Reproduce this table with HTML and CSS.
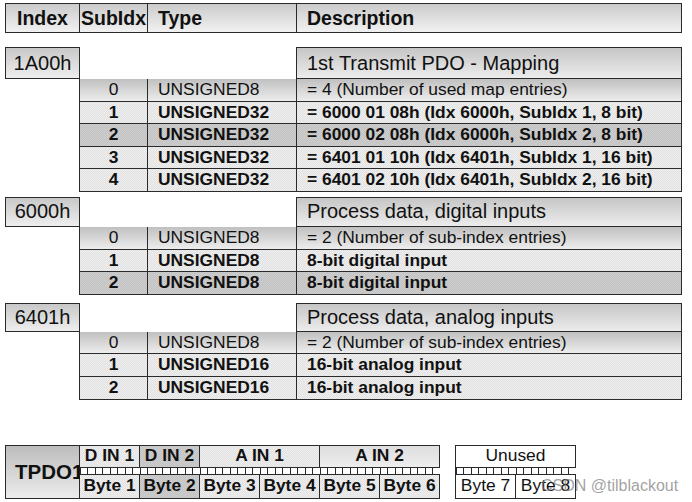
FILE: index.html
```html
<!DOCTYPE html>
<html>
<head>
<meta charset="utf-8">
<link rel="stylesheet" href="styles.css">
</head>
<body>
<div class="doc">
  <div class="hdr">
    <div class="hc center">Index</div>
    <div class="hc center">SubIdx</div>
    <div class="hc">Type</div>
    <div class="hc">Description</div>
  </div>

  <section class="obj first">
    <div class="obj-top tall">
      <div class="obj-idx">1A00h</div>
      <div class="obj-desc">1st Transmit PDO - Mapping</div>
    </div>
    <div class="subs">
      <div class="row grad"><div class="sc num">0</div><div class="sc">UNSIGNED8</div><div class="sc">= 4 (Number of used map entries)</div></div>
      <div class="row tex-l bold"><div class="sc num">1</div><div class="sc">UNSIGNED32</div><div class="sc">= 6000 01 08h (Idx 6000h, SubIdx 1, 8 bit)</div></div>
      <div class="row tex-d bold"><div class="sc num">2</div><div class="sc">UNSIGNED32</div><div class="sc">= 6000 02 08h (Idx 6000h, SubIdx 2, 8 bit)</div></div>
      <div class="row tex-l bold"><div class="sc num">3</div><div class="sc">UNSIGNED32</div><div class="sc">= 6401 01 10h (Idx 6401h, SubIdx 1, 16 bit)</div></div>
      <div class="row tex-l bold"><div class="sc num">4</div><div class="sc">UNSIGNED32</div><div class="sc">= 6401 02 10h (Idx 6401h, SubIdx 2, 16 bit)</div></div>
    </div>
  </section>

  <section class="obj second">
    <div class="obj-top">
      <div class="obj-idx">6000h</div>
      <div class="obj-desc">Process data, digital inputs</div>
    </div>
    <div class="subs">
      <div class="row grad"><div class="sc num">0</div><div class="sc">UNSIGNED8</div><div class="sc">= 2 (Number of sub-index entries)</div></div>
      <div class="row tex-l bold"><div class="sc num">1</div><div class="sc">UNSIGNED8</div><div class="sc">8-bit digital input</div></div>
      <div class="row tex-d bold"><div class="sc num">2</div><div class="sc">UNSIGNED8</div><div class="sc">8-bit digital input</div></div>
    </div>
  </section>

  <section class="obj third">
    <div class="obj-top short">
      <div class="obj-idx">6401h</div>
      <div class="obj-desc">Process data, analog inputs</div>
    </div>
    <div class="subs">
      <div class="row grad"><div class="sc num">0</div><div class="sc">UNSIGNED8</div><div class="sc">= 2 (Number of sub-index entries)</div></div>
      <div class="row tex-l bold"><div class="sc num">1</div><div class="sc">UNSIGNED16</div><div class="sc">16-bit analog input</div></div>
      <div class="row tex-l bold"><div class="sc num">2</div><div class="sc">UNSIGNED16</div><div class="sc">16-bit analog input</div></div>
    </div>
  </section>

  <div class="tpdo">
    <div class="tp-label">TPDO1</div>
    <div class="tp-fields">
      <div class="fc tex-l">D IN 1</div>
      <div class="fc tex-d">D IN 2</div>
      <div class="fc tex-l span2">A IN 1</div>
      <div class="fc grad-l span2">A IN 2</div>
      <div class="strip"></div>
      <div class="bc tex-l">Byte 1</div>
      <div class="bc tex-d">Byte 2</div>
      <div class="bc tex-l">Byte 3</div>
      <div class="bc tex-l">Byte 4</div>
      <div class="bc tex-l">Byte 5</div>
      <div class="bc tex-l">Byte 6</div>
    </div>
    <div class="tp-unused">
      <div class="fc span2">Unused</div>
      <div class="strip"></div>
      <div class="bc">Byte 7</div>
      <div class="bc">Byte 8</div>
    </div>
  </div>
</div>
<div class="wm">CSDN @tilblackout</div>
</body>
</html>
```

FILE: styles.css
```css
* { box-sizing: border-box; }

html, body {
  margin: 0;
  background: #fff;
}

body {
  width: 692px;
  height: 502px;
  overflow: hidden;
  position: relative;
  padding: 3px 0 0 5px;
  font-family: "Liberation Sans", Arial, sans-serif;
  color: #111;
}

.doc { width: 677px; }

/* header */
.hdr {
  display: grid;
  grid-template-columns: 74px 68px 149px 1fr;
  height: 30px;
  border: 1px solid #2a2a2a;
  font-weight: bold;
  font-size: 19.5px;
}
.hc {
  display: flex;
  align-items: center;
  padding-left: 10px;
  border-right: 1px solid #2a2a2a;
  background: linear-gradient(#cbcbcb, #f1f1f1);
  white-space: nowrap;
}
.hc:last-child { border-right: 0; }
.hc.center { justify-content: center; padding-left: 0; }

/* object blocks */
.obj.first { margin-top: 14px; }
.obj.second { margin-top: 5px; }
.obj.third { margin-top: 8px; }

.obj-top {
  display: flex;
  justify-content: space-between;
  height: 30px;
  font-size: 20px;
}
.obj-top.tall { height: 32px; }
.obj-top.short { height: 29px; }
.obj-idx {
  width: 75px;
  border: 1px solid #2a2a2a;
  display: flex;
  align-items: center;
  justify-content: center;
  background: linear-gradient(#c8c8c8, #eeeeee);
}
.obj-desc {
  width: 386px;
  border: 1px solid #2a2a2a;
  display: flex;
  align-items: center;
  padding-left: 10px;
  background: linear-gradient(#c6c6c6, #ececec);
  white-space: nowrap;
}

.subs {
  margin-left: 74px;
  border-left: 1px solid #2a2a2a;
  font-size: 17.4px;
}
.row {
  display: grid;
  grid-template-columns: 68px 149px 1fr;
  height: 22.6px;
  border-bottom: 1px solid #2a2a2a;
}
.row.bold { font-weight: bold; }
.sc {
  display: flex;
  align-items: center;
  padding-left: 10px;
  border-right: 1px solid #2a2a2a;
  white-space: nowrap;
  line-height: 1;
}
.sc.num { justify-content: center; padding-left: 0; }

/* fills */
.grad { background: linear-gradient(#c0c0c0, #ededed); }
.grad-l { background: linear-gradient(#dedede, #ededed); }
.tex-l {
  background-color: #e8e8e8;
  background-image: repeating-conic-gradient(#e2e2e2 0 25%, #eeeeee 0 50%);
  background-size: 2px 2px;
}
.tex-d {
  background-color: #c8c8c8;
  background-image: repeating-conic-gradient(#c3c3c3 0 25%, #cdcdcd 0 50%);
  background-size: 2px 2px;
}

/* TPDO diagram */
.tpdo {
  display: flex;
  margin-top: 45px;
  height: 54px;
}
.tp-label {
  width: 75px;
  border: 1px solid #2a2a2a;
  display: flex;
  align-items: center;
  padding-left: 9px;
  font-weight: bold;
  font-size: 20.5px;
  white-space: nowrap;
  background: linear-gradient(#bdbdbd, #ececec);
}
.tp-fields, .tp-unused {
  display: grid;
  grid-template-rows: 22px 7px 1fr;
  border-top: 1px solid #2a2a2a;
  border-bottom: 1px solid #2a2a2a;
  font-size: 17.4px;
}
.tp-fields {
  width: 360px;
  grid-template-columns: repeat(6, 60px);
  font-weight: bold;
}
.tp-unused {
  width: 121px;
  margin-left: 15px;
  grid-template-columns: 60px 60px;
  border-left: 1px solid #2a2a2a;
  background: #fff;
}
.fc, .bc {
  display: flex;
  align-items: center;
  justify-content: center;
  border-right: 1px solid #2a2a2a;
  white-space: nowrap;
  line-height: 1;
}
.fc { border-bottom: 1px solid #2a2a2a; }
.span2 { grid-column: span 2; }
.strip {
  grid-column: 1 / -1;
  border-bottom: 1px solid #2a2a2a;
  background: repeating-linear-gradient(to right, #2a2a2a 0 1px, #fff 1px 7.5px);
}

/* watermark overlay */
.wm {
  position: absolute;
  left: 541px;
  top: 477px;
  font-size: 16px;
  color: rgba(120, 120, 120, 0.7);
  white-space: nowrap;
}
```
